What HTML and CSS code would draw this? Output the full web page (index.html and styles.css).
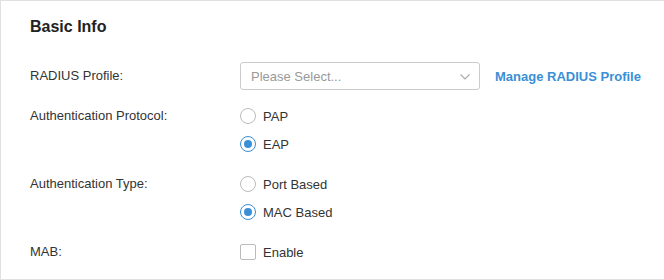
FILE: index.html
```html
<!DOCTYPE html>
<html lang="en">
<head>
  <meta charset="UTF-8" />
  <title>Basic Info</title>
  <link rel="stylesheet" href="styles.css">
</head>
<body>
  <section class="card">
    <h2 class="card-title">Basic Info</h2>

    <div class="form-row">
      <div class="form-label">RADIUS Profile:</div>
      <div class="form-control inline">
        <div class="select">
          <span class="placeholder">Please Select...</span>
          <svg class="chevron" width="10" height="6" viewBox="0 0 10 6">
            <path d="M0.5 0.5 L5 5 L9.5 0.5" fill="none" stroke="#aaa" stroke-width="1.2" />
          </svg>
        </div>
        <a class="link" href="#">Manage RADIUS Profile</a>
      </div>
    </div>

    <div class="form-row">
      <div class="form-label">Authentication Protocol:</div>
      <div class="form-control">
        <label class="option"><span class="radio"></span>PAP</label>
        <label class="option"><span class="radio checked"></span>EAP</label>
      </div>
    </div>

    <div class="form-row type-row">
      <div class="form-label">Authentication Type:</div>
      <div class="form-control">
        <label class="option"><span class="radio"></span>Port Based</label>
        <label class="option"><span class="radio checked"></span>MAC Based</label>
      </div>
    </div>

    <div class="form-row">
      <div class="form-label">MAB:</div>
      <div class="form-control">
        <label class="option"><span class="checkbox"></span>Enable</label>
      </div>
    </div>
  </section>
</body>
</html>
```

FILE: styles.css
```css
* {
  margin: 0;
  padding: 0;
  box-sizing: border-box;
}
body {
  font-family: "Liberation Sans", Arial, sans-serif;
  font-size: 13px;
  color: #333;
  background: #fff;
  overflow: hidden;
}
.card {
  width: 664px;
  height: 280px;
  border: 1px solid #e0e0e0;
  border-right: none;
  padding: 16px 0 0 29px;
}
.card-title {
  font-size: 16px;
  font-weight: bold;
  line-height: 20px;
  color: #222;
  margin-bottom: 25px;
}
.form-row {
  display: flex;
  margin-bottom: 12px;
}
.type-row {
  margin-top: 2px;
}
.form-label {
  width: 210px;
  line-height: 28px;
  flex-shrink: 0;
}
.form-control {
  display: flex;
  flex-direction: column;
}
.form-control.inline {
  flex-direction: row;
  align-items: center;
  gap: 15px;
}
.select {
  width: 240px;
  height: 28px;
  flex-shrink: 0;
  border: 1px solid #ccc;
  border-radius: 3px;
  display: flex;
  align-items: center;
  justify-content: space-between;
  padding: 0 9px 0 10px;
}
.placeholder {
  color: #999;
}
.chevron {
  display: block;
  margin-top: 2px;
}
.link {
  color: #3a8fd6;
  font-weight: bold;
  text-decoration: none;
  white-space: nowrap;
}
.option {
  display: flex;
  align-items: center;
  height: 28px;
  gap: 7px;
}
.radio {
  width: 16px;
  height: 16px;
  border: 1px solid #bbb;
  border-radius: 50%;
  position: relative;
}
.radio.checked {
  border-color: #3a8fd6;
}
.radio.checked::after {
  content: "";
  position: absolute;
  left: 3px;
  top: 3px;
  width: 8px;
  height: 8px;
  border-radius: 50%;
  background: #3a8fd6;
}
.checkbox {
  width: 16px;
  height: 16px;
  border: 1px solid #bbb;
  border-radius: 2px;
}
```
